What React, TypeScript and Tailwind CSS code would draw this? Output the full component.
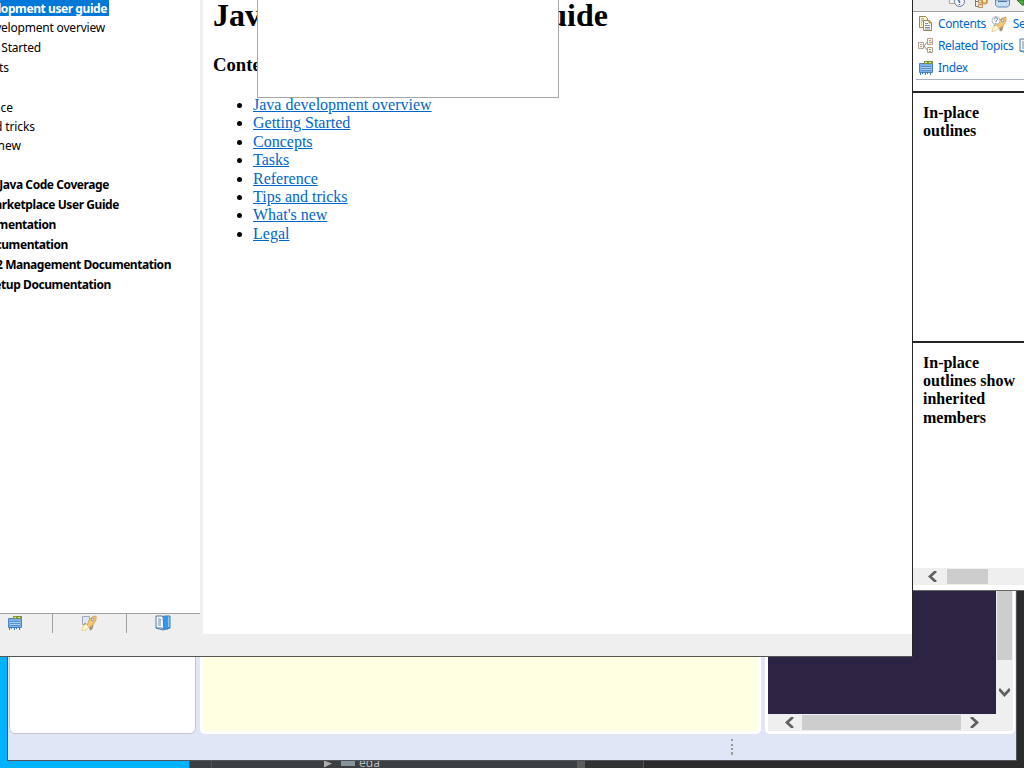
import React from "react";

type TreeRow = { text: string; box: string; style: string };

const tree: TreeRow[] = [
  { text: "lopment user guide", box: "mb-[3px] h-[16px] w-[109px] pr-[2px] bg-[#0078d7]", style: "font-bold text-white tracking-[-0.42px]" },
  { text: "evelopment overview", box: "h-[20px] w-[105px]", style: "tracking-[-0.2px]" },
  { text: "Started", box: "h-[20px] w-[41px]", style: "tracking-[-0.2px]" },
  { text: "ts", box: "h-[20px] w-[9px]", style: "" },
  { text: "", box: "h-[20px] w-[10px]", style: "" },
  { text: "ce", box: "h-[19px] w-[13px]", style: "" },
  { text: "d tricks", box: "h-[19px] w-[35px]", style: "tracking-[-0.1px]" },
  { text: "new", box: "h-[19px] w-[21px]", style: "" },
  { text: "", box: "h-[20px] w-[10px]", style: "" },
  { text: "Java Code Coverage", box: "h-[20px] w-[109px]", style: "font-bold tracking-[-0.42px]" },
  { text: "arketplace User Guide", box: "h-[20px] w-[119px]", style: "font-bold tracking-[-0.42px]" },
  { text: "mentation", box: "h-[20px] w-[56px]", style: "font-bold tracking-[-0.42px]" },
  { text: "cumentation", box: "h-[20px] w-[68px]", style: "font-bold tracking-[-0.42px]" },
  { text: "2 Management Documentation", box: "h-[20px] w-[171px]", style: "font-bold tracking-[-0.45px]" },
  { text: "etup Documentation", box: "h-[20px] w-[111px]", style: "font-bold tracking-[-0.42px]" },
];

const links = [
  "Java development overview",
  "Getting Started",
  "Concepts",
  "Tasks",
  "Reference",
  "Tips and tricks",
  "What's new",
  "Legal",
];

function IndexIcon() {
  return (
    <svg viewBox="0 0 16 16" className="h-4 w-4 shrink-0">
      <path d="M1.5 3.5h13v9h-13z" fill="#78b2e7" stroke="#4d82c1" />
      <path d="M6 1h9v3H6z" fill="#779344" />
      <path d="M7 2h2v1H7zm4 0h2v1h-2z" fill="#f1e27b" />
      <path d="M3 6h10v5H3z" fill="#a8d0f1" />
      <path d="M3 6.5h10M3 8.5h10M3 10.5h10" stroke="#5b8dca" />
      <path d="M2.5 12v3m2-3v2m3-2v3m2-3v2m3-2v3" stroke="#397bbc" />
    </svg>
  );
}

function SearchIcon({ device = false }: { device?: boolean }) {
  return (
    <svg viewBox="0 0 16 16" className="h-4 w-4 shrink-0">
      {device && <path d="M1.5 1.5h7v8h-7z" fill="#dceafb" stroke="#a4a7b4" />}
      <path d="M6 11l2-6 3-3 4-1v4l-3 5-4 3z" fill="#f7c967" stroke="#d09a4b" strokeWidth=".8" />
      <path d="M5 8L3 9v3l3-1m3 1v3l2-1 1-4" fill="#a59d9b" stroke="#9b795b" strokeWidth=".7" />
      <path d="M5 9l3 3-2 2-5 2 1-5z" fill="#fff8d0" stroke="#dec184" strokeWidth=".7" />
      <circle cx="11.5" cy="4.5" r="1.3" fill="#f3f6f8" stroke="#738caa" />
      {!device && (
        <g>
          <circle cx="5" cy="4.5" r="4" fill="#f8fafc" stroke="#aeb9c6" />
          <path d="M3.5 3.5C3.5 1 7 1.5 6.5 3.5L5 5v1m0 1v1" fill="none" stroke="#6284b5" />
        </g>
      )}
    </svg>
  );
}

function BookIcon() {
  return (
    <svg viewBox="0 0 16 16" className="h-4 w-4 shrink-0">
      <path d="M1 1h6l2 1v12l-2-1H1z" fill="#f5f8fb" stroke="#56799a" />
      <path d="M8 2l1-1h6v12h-3l-3 1z" fill="#8bc7f2" stroke="#397cae" />
      <path d="M9 1h4v14l-2-2-2 2z" fill="#3597eb" />
      <path d="M3 4h2l1 1M3 6h3M3 8h3M3 10h3" stroke="#6c91ad" fill="none" />
      <path d="M1 13l7 2 7-2" stroke="#377eb5" fill="none" />
    </svg>
  );
}

function ContentsIcon() {
  return (
    <svg viewBox="0 0 16 16" className="h-4 w-4 shrink-0">
      <path d="M1.5.5h6l2 2v9h-8z" fill="#fff7d8" stroke="#9f8650" />
      <path d="M5.5 4.5h6l2 2v8h-8z" fill="#fffaf0" stroke="#9f8650" />
      <path d="M11 4v3h3" fill="#e6c66b" stroke="#9f8650" />
      <path d="M7 7.5h3M7 9.5h5M7 11.5h5M7 13h5M3 3h3M3 5h2M3 7h1M3 9h1" stroke="#7b92b3" />
    </svg>
  );
}

function RelatedIcon() {
  return (
    <svg viewBox="0 0 16 16" className="h-4 w-4 shrink-0">
      <path d="M6 8l4-5M6 8l4 5" stroke="#8f8c86" />
      <path d="M.5 4.5h5v6h-5zm9-4h5v6h-5zm0 9h5v5h-5z" fill="#fff4df" stroke="#b4a18e" />
      <path d="M2 6.5h2m-2 2h2M11 2.5h2m-2 2h3m-3 7h2m-2 2h2" stroke="#9b9db0" />
    </svg>
  );
}

function Arrow({ direction }: { direction: "left" | "right" | "down" }) {
  const d = direction === "left" ? "M8 0L2 5.5L8 11" : direction === "right" ? "M2 0L8 5.5L2 11" : "M0 2L5.5 8L11 2";
  return (
    <svg viewBox={direction === "down" ? "0 0 11 10" : "0 0 10 11"} className={direction === "down" ? "h-[10px] w-[11px]" : "h-[11px] w-[10px]"}>
      <path d={d} fill="none" stroke="#606060" strokeWidth="2.7" />
    </svg>
  );
}

function HelpWindow() {
  return (
    <div className="absolute left-0 top-0 flex h-[657px] w-[913px] flex-col border-b border-r border-b-[#555555] border-r-[#252525] bg-[#efefef]">
      <div className="flex h-[634px]">
        <aside className="flex w-[200px] shrink-0 flex-col">
          <div className="h-[613px] bg-white">
            {tree.map((row, i) => (
              <div key={i} className={`flex items-start justify-end overflow-hidden whitespace-nowrap font-['Noto_Sans',sans-serif] text-[12px] leading-[17px] text-black ${row.box}`}>
                <span className={row.style}>{row.text}</span>
              </div>
            ))}
          </div>
          <div className="flex h-5 border-t border-[#a0a0a0]">
            <div className="w-[53px] border-r border-[#a0a0a0] pl-[7px] pt-px"><IndexIcon /></div>
            <div className="w-[74px] border-r border-[#a0a0a0] pl-[28px] pt-px"><SearchIcon device /></div>
            <div className="pl-[28px] pt-px"><BookIcon /></div>
          </div>
        </aside>
        <main className="ml-[3px] flex-1 bg-white pl-[10px] font-['Liberation_Serif',serif] text-black">
          <h1 className="h-[55px] whitespace-nowrap text-[32px] font-bold leading-[30px]">Java development user guide</h1>
          <h2 className="h-[41px] text-[18.7px] font-bold leading-[20px]">Contents</h2>
          <ul className="list-disc pl-10 text-[16px] leading-[18.4px]">
            {links.map((link) => (
              <li key={link}><a href="#" className="text-[#0066cc] underline">{link}</a></li>
            ))}
          </ul>
        </main>
      </div>
      <div className="absolute left-[257px] top-0 h-[98px] w-[302px] border border-t-0 border-[#a6a6a6] bg-white" />
    </div>
  );
}

function TopicWindow() {
  const linkClass = "font-['Noto_Sans',sans-serif] text-[12px] leading-4 tracking-[-0.38px] text-[#0066cc]";
  return (
    <div className="absolute left-[913px] top-0 flex h-[591px] w-[111px] flex-col overflow-hidden border-b border-[#686868] bg-white">
      <div className="flex h-3 shrink-0 border-b border-[#a0a0a0] bg-[#efefef] pl-[35px]">
        <svg viewBox="0 0 76 11" className="h-[11px] w-[76px]">
          <path d="M1.5 0v3.5h5" fill="#fff" stroke="#b99f72" />
          <circle cx="11.5" cy="1.5" r="5" fill="#f6f8fc" stroke="#6478a8" />
          <path d="M10 1l3-3M11.5 1v2m0 1v1" stroke="#426ca6" strokeWidth="1.5" />
          <path d="M27.5 0v6.5h5m-5-5h5" fill="none" stroke="#5681b8" />
          <path d="M30.5 0h3v3h-3zm0 4.500h4v3h-4z" fill="#eee1bb" stroke="#bb925e" />
          <circle cx="36.500" cy="1" r="2.500" fill="#fff1c7" stroke="#d39a45" strokeWidth="2" />
          <path d="M47.5 0v5l2 2h10l2-2V0z" fill="#c6dff5" stroke="#6687b3" />
          <path d="M50 1.500h9" stroke="#536f9d" />
          <path d="M69 0l5 5h2V0z" fill="#55aa47" stroke="#257524" />
        </svg>
      </div>
      <div className="h-[68px] shrink-0 whitespace-nowrap pt-px">
        <div className="flex h-[22px] items-center pl-[5px]">
          <ContentsIcon /><span className={`ml-[4px] w-[50px] ${linkClass}`}>Contents</span>
          <span className="ml-[5px]"><SearchIcon /></span><span className={`ml-[6px] ${linkClass}`}>Search</span>
        </div>
        <div className="flex h-[22px] items-center pl-[5px]">
          <RelatedIcon /><span className={`ml-[4px] w-[76px] ${linkClass}`}>Related Topics</span><span className="ml-[6px]"><BookIcon /></span>
        </div>
        <div className="flex h-[22px] items-center pl-[5px]">
          <IndexIcon /><span className={`ml-[4px] ${linkClass}`}>Index</span>
        </div>
        <div className="ml-[3px] h-px bg-[#aab2bf]" />
      </div>
      <div className="mt-[11px] h-[250px] shrink-0 border-t-2 border-[#252525] pl-[10px] pt-[11px] font-['Liberation_Serif',serif] text-[16px] font-bold leading-[18.4px] text-black">
        In-place<br />outlines
      </div>
      <div className="h-[227px] shrink-0 border-t-2 border-[#252525] pl-[10px] pt-[10.500px] font-['Liberation_Serif',serif] text-[16px] font-bold leading-[18.4px] text-black">
        In-place<br /><span className="whitespace-nowrap">outlines show</span><br />inherited<br />members
      </div>
      <div className="flex h-[17px] shrink-0 items-center bg-[#efefef]">
        <div className="ml-[15px]"><Arrow direction="left" /></div><div className="ml-[9px] h-[15px] w-[41px] bg-[#cdcdcd]" />
      </div>
    </div>
  );
}

function EditorWindow() {
  return (
    <div className="absolute left-[7px] top-[560px] flex h-[201px] w-[1010px] flex-col border border-[#50545c] bg-[#e0e6f5]">
      <div className="flex h-[173px]">
        <div className="ml-px h-full w-[187px] rounded-b-[6px] border border-[#c5c5c5] bg-white" />
        <div className="ml-[4px] h-full w-[561px] rounded-b-[5px] bg-white px-[3px] pb-[3px]"><div className="h-full bg-[#ffffe1]" /></div>
        <div className="ml-[4px] flex h-full w-[250px] rounded-b-[5px] bg-white pb-[3px] pl-[3px] pr-[2px]">
          <div className="flex w-full flex-col bg-[#efefef]">
            <div className="flex h-[153px]">
              <div className="h-full w-[228px] bg-[#2c2442]" />
              <div className="ml-px flex w-[15px] flex-col items-center"><div className="mb-[27px] h-[99px] w-full bg-[#cdcdcd]" /><Arrow direction="down" /></div>
            </div>
            <div className="flex h-[17px] items-center">
              <div className="ml-[17px]"><Arrow direction="left" /></div><div className="ml-[7px] h-[15px] w-[159px] bg-[#cdcdcd]" /><div className="ml-[8px]"><Arrow direction="right" /></div>
            </div>
          </div>
        </div>
      </div>
      <svg viewBox="0 0 3 18" className="ml-[723px] mt-[5px] h-[18px] w-[3px]">
        <path d="M0 0h2v2H0zm0 5h2v2H0zm0 4h2v2H0zm0 4h2v3H0z" fill="#9d9995" />
      </svg>
    </div>
  );
}

export default function App() {
  return (
    <div className="relative flex h-[768px] w-[1024px] overflow-hidden bg-[#2b2b2b]">
      <div className="w-[189px] bg-[#00b2ff]" />
      <div className="flex flex-1 flex-col justify-end">
        <div className="flex h-[8px] bg-[#2b2b2b]">
          <div className="flex h-full w-[388px] border-l border-[#1774a0] bg-[#3c3f41]">
            <div className="w-[22px] border-r border-[#505355]" />
            <svg viewBox="0 0 8 7" className="ml-[112px] h-[8px] w-[8px]"><path d="M0 0l8 3-8 4z" fill="#adadad" /></svg>
            <div className="ml-[9px] h-[6px] w-[14px] bg-[#87939a]" />
            <span className="-mt-[3px] ml-[4px] font-['Noto_Sans',sans-serif] text-[12px] leading-3 text-[#b9bdc0]">eda</span>
          </div>
          <div className="w-2 bg-[#595b5d]" /><div className="w-[59px] border-r border-[#555555] bg-[#313335]" />
        </div>
      </div>
      <EditorWindow />
      <TopicWindow />
      <HelpWindow />
    </div>
  );
}
